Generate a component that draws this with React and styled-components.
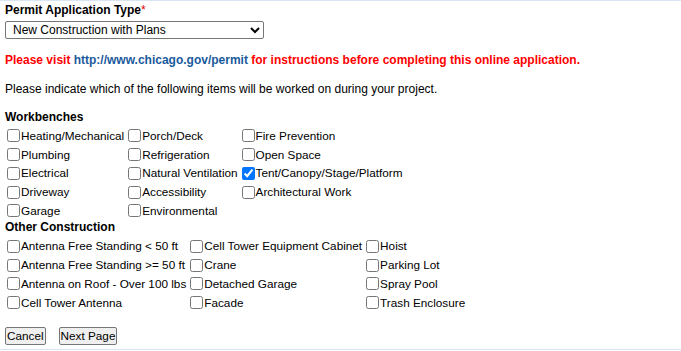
import React, { useState } from "react";
import styled, { createGlobalStyle } from "styled-components";

const GlobalStyle = createGlobalStyle`
  html, body {
    margin: 0;
    padding: 0;
    background: #ffffff;
  }
  body {
    font-family: "Liberation Sans", Arial, sans-serif;
    font-size: 12px;
    color: #000000;
  }
`;

const workbenches = [
  ["Heating/Mechanical", "Porch/Deck", "Fire Prevention"],
  ["Plumbing", "Refrigeration", "Open Space"],
  ["Electrical", "Natural Ventilation", "Tent/Canopy/Stage/Platform"],
  ["Driveway", "Accessibility", "Architectural Work"],
  ["Garage", "Environmental", null],
];

const otherConstruction = [
  ["Antenna Free Standing < 50 ft", "Cell Tower Equipment Cabinet", "Hoist"],
  ["Antenna Free Standing >= 50 ft", "Crane", "Parking Lot"],
  ["Antenna on Roof - Over 100 lbs", "Detached Garage", "Spray Pool"],
  ["Cell Tower Antenna", "Facade", "Trash Enclosure"],
];

export default function App() {
  const [checked, setChecked] = useState({ "Tent/Canopy/Stage/Platform": true });
  const toggle = (name) => setChecked((c) => ({ ...c, [name]: !c[name] }));

  const renderGrid = (rows) => (
    <CheckGrid>
      {rows.flat().map((name, i) =>
        name ? (
          <CheckItem key={i}>
            <Box
              type="checkbox"
              checked={!!checked[name]}
              onChange={() => toggle(name)}
            />
            {name}
          </CheckItem>
        ) : (
          <span key={i} />
        )
      )}
    </CheckGrid>
  );

  return (
    <>
      <GlobalStyle />
      <Frame>
        <FieldLabel>
          Permit Application Type<Star>*</Star>
        </FieldLabel>
        <TypeSelect defaultValue="plans">
          <option value="plans">New Construction with Plans</option>
          <option value="express">Express Permit</option>
        </TypeSelect>
        <Notice>
          Please visit <Link href="#">http://www.chicago.gov/permit</Link> for
          instructions before completing this online application.
        </Notice>
        <Para>
          Please indicate which of the following items will be worked on during
          your project.
        </Para>
        <SectionTitle $top={14}>Workbenches</SectionTitle>
        {renderGrid(workbenches)}
        <SectionTitle $top={0}>Other Construction</SectionTitle>
        {renderGrid(otherConstruction)}
        <ButtonRow>
          <FormButton type="button">Cancel</FormButton>
          <FormButton type="button">Next Page</FormButton>
        </ButtonRow>
      </Frame>
    </>
  );
}

const Frame = styled.div`
  border-top: 1px solid #d8e6f3;
  border-bottom: 1px solid #d8e6f3;
  padding: 0 5px 4px 5px;
`;

const FieldLabel = styled.div`
  font-weight: bold;
  line-height: 14px;
  margin-top: 2px;
`;

const Star = styled.span`
  color: #e00000;
  font-weight: normal;
`;

const TypeSelect = styled.select`
  display: block;
  margin-top: 4px;
  width: 259px;
  height: 18px;
  font-family: "Liberation Sans", Arial, sans-serif;
  font-size: 12px;
  color: #000;
  border: 1px solid #767676;
  border-radius: 2px;
  background: #fff;
  padding: 0 0 0 3px;
`;

const Notice = styled.div`
  margin-top: 14px;
  line-height: 14px;
  font-weight: bold;
  color: #ff0000;
`;

const Link = styled.a`
  color: #1a5a9c;
  text-decoration: none;
`;

const Para = styled.div`
  margin-top: 15px;
  line-height: 14px;
`;

const SectionTitle = styled.div`
  margin-top: ${(p) => p.$top}px;
  line-height: 14px;
  font-weight: bold;
`;

const CheckGrid = styled.div`
  display: grid;
  grid-template-columns: repeat(3, max-content);
  grid-auto-rows: 18.75px;
  column-gap: 4px;
  margin-top: 2.6px;
  padding-left: 2px;
  font-size: 11.75px;
`;

const CheckItem = styled.label`
  display: flex;
  align-items: center;
  white-space: nowrap;
  line-height: 14px;
`;

const Box = styled.input`
  width: 13px;
  height: 13px;
  margin: 0 1px 0 0;
`;

const ButtonRow = styled.div`
  display: flex;
  gap: 13px;
  margin-top: 15px;
`;

const FormButton = styled.button`
  height: 18px;
  padding: 0 1px;
  font-family: "Liberation Sans", Arial, sans-serif;
  font-size: 11.75px;
  color: #000;
  background: #efefef;
  border: 1px solid #767676;
  border-radius: 2px;
`;
